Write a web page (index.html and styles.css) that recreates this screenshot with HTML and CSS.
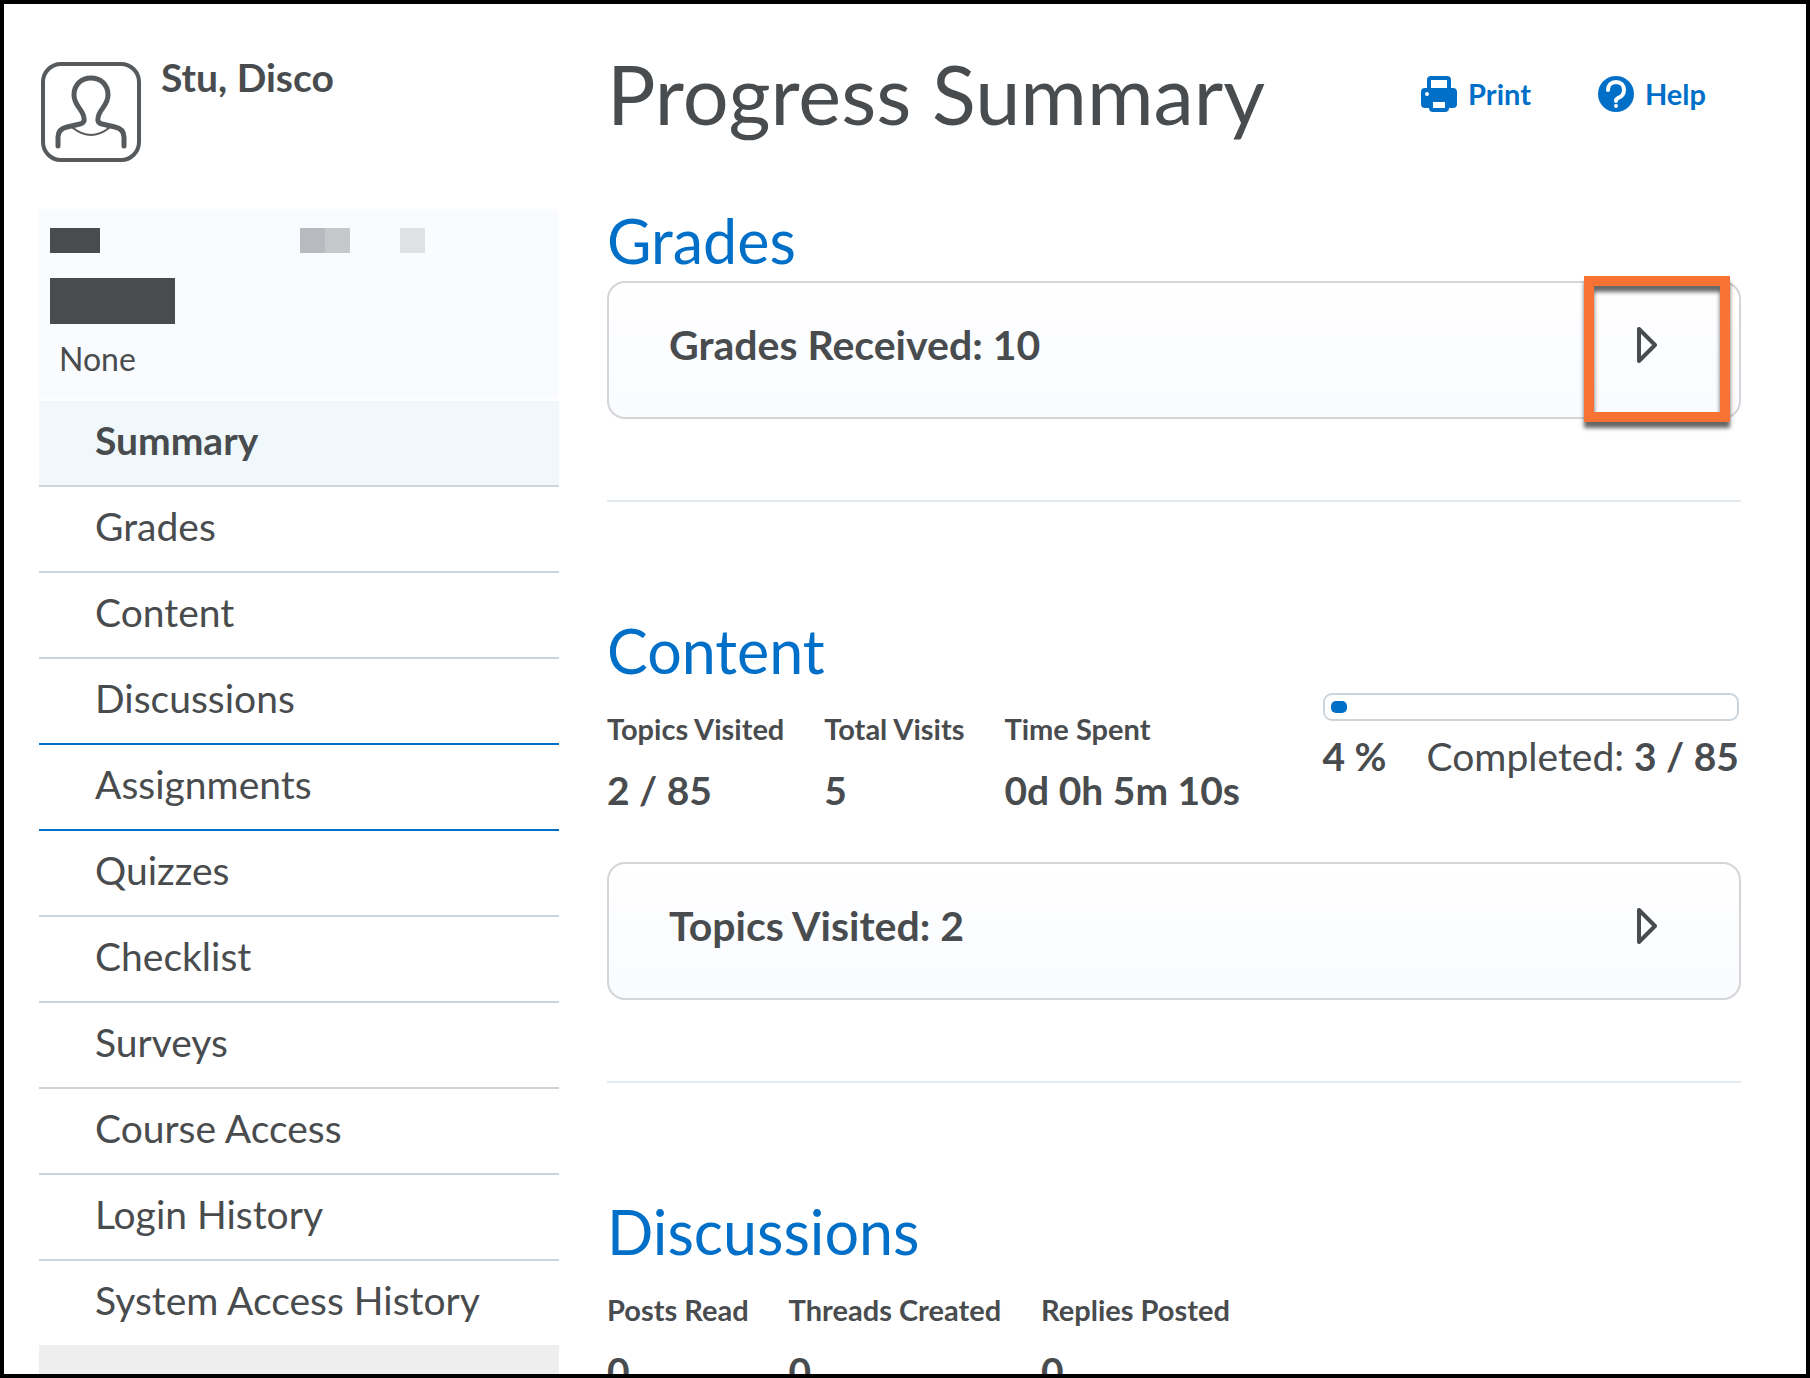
FILE: index.html
```html
<!DOCTYPE html>
<html lang="en">
<head>
    <meta charset="UTF-8">
    <meta name="viewport" content="width=device-width, initial-scale=1.0">
    <title>Progress Summary</title>
    <link rel="stylesheet" href="styles.css">
</head>
<body>
    <div class="page">
        <aside class="sidebar">
            <div class="user">
                <svg class="avatar" viewBox="0 0 100 100" fill="none" stroke="#565a5c" stroke-linecap="round">
                    <rect x="2" y="2" width="96" height="96" rx="18" stroke-width="4"/>
                    <path d="M17 84V75Q17 67 26 65L39 62Q44 61 43 56C42 47 33 44 33 33C33 22 41 16 50 16C59 16 67 22 67 33C67 44 58 47 57 56Q56 61 61 62L74 65Q83 67 83 75V84" stroke-width="5"/>
                    <path d="M32 66Q50 80 68 66" stroke-width="2"/>
                </svg>
                <span class="user-name">Stu, Disco</span>
            </div>
            <div class="course">
                <div class="blocks">
                    <span class="block dark"></span>
                    <span class="block gray"></span>
                    <span class="block silver"></span>
                    <span class="block light"></span>
                </div>
                <div class="block-large"></div>
                <p class="course-role">None</p>
            </div>
            <nav class="nav">
                <a href="#" class="current">Summary</a>
                <a href="#">Grades</a>
                <a href="#">Content</a>
                <a href="#" class="blue-line">Discussions</a>
                <a href="#" class="blue-line">Assignments</a>
                <a href="#">Quizzes</a>
                <a href="#">Checklist</a>
                <a href="#">Surveys</a>
                <a href="#">Course Access</a>
                <a href="#">Login History</a>
                <a href="#">System Access History</a>
            </nav>
            <div class="sidebar-end"></div>
        </aside>

        <main class="main">
            <header class="header">
                <h1>Progress Summary</h1>
                <div class="actions">
                    <a href="#">
                        <svg viewBox="0 0 36 36" fill="#006fc8">
                            <path fill-rule="evenodd" d="M6 12V4Q6 0 10 0H26Q30 0 30 4V12H32Q36 12 36 16V28Q36 32 32 32H28Q28 36 24 36H12Q8 36 8 32H4Q0 32 0 28V16Q0 12 4 12ZM10 4V12H26V4ZM12 26V32H24V26ZM6 16A2 2 0 1 0 6 20A2 2 0 1 0 6 16Z"/>
                        </svg>
                        Print
                    </a>
                    <a href="#">
                        <svg viewBox="0 0 36 36">
                            <circle cx="18" cy="18" r="18" fill="#006fc8"/>
                            <path d="M10 14C10 9 13 6 18 6C23 6 26 9 26 14C26 19 23 21 20 22Q18 23 18 25" fill="none" stroke="#fff" stroke-width="4" stroke-linecap="round"/>
                            <circle cx="18" cy="30" r="2" fill="#fff"/>
                        </svg>
                        Help
                    </a>
                </div>
            </header>

            <section class="section">
                <h2><a href="#">Grades</a></h2>
                <div class="panel">
                    <h3>Grades Received: 10</h3>
                    <button class="expand" aria-label="Show grades">
                        <svg viewBox="0 0 20 36"><path d="M2 2V34L18 18Z"/></svg>
                    </button>
                    <span class="highlight"></span>
                </div>
            </section>

            <section class="section">
                <h2><a href="#">Content</a></h2>
                <div class="details">
                    <table class="stats">
                        <tr>
                            <th>Topics Visited</th>
                            <th>Total Visits</th>
                            <th>Time Spent</th>
                        </tr>
                        <tr>
                            <td>2 / 85</td>
                            <td>5</td>
                            <td>0d 0h 5m 10s</td>
                        </tr>
                    </table>
                    <div class="completion">
                        <progress value="4" max="100" aria-label="Content completed"></progress>
                        <div class="completion-text">
                            <b>4 %</b>
                            <span>Completed: <b>3 / 85</b></span>
                        </div>
                    </div>
                </div>
                <div class="panel">
                    <h3>Topics Visited: 2</h3>
                    <button class="expand" aria-label="Show topics">
                        <svg viewBox="0 0 20 36"><path d="M2 2V34L18 18Z"/></svg>
                    </button>
                </div>
            </section>

            <section class="section">
                <h2><a href="#">Discussions</a></h2>
                <div class="details">
                    <table class="stats">
                        <tr>
                            <th>Posts Read</th>
                            <th>Threads Created</th>
                            <th>Replies Posted</th>
                        </tr>
                        <tr>
                            <td>0</td>
                            <td>0</td>
                            <td>0</td>
                        </tr>
                    </table>
                </div>
            </section>
        </main>
    </div>
</body>
</html>
```
FILE: styles.css
```css
* {
    box-sizing: border-box;
}

body {
    margin: 0;
    height: 100vh;
    overflow: hidden;
    border: 4px solid #000;
    background: #fff;
    color: #494c4e;
    font-family: Lato, sans-serif;
    font-size: 39px;
    line-height: 46px;
}

a {
    color: #006fc8;
    text-decoration: none;
}

h1, h2, h3, p {
    margin: 0;
    font-weight: normal;
}

.page {
    display: grid;
    grid-template-columns: 520px 1fr;
    gap: 48px;
    padding: 42px 65px 0 35px;
}

/* sidebar */

.user {
    display: flex;
    gap: 20px;
    padding: 8px 0 0 2px;
    height: 163px;
}

.avatar {
    width: 100px;
    height: 100px;
    margin-top: 8px;
}

.user-name {
    font-weight: bold;
}

.course {
    height: 190px;
    margin-bottom: 2px;
    padding: 19px 11px;
    background: #f9fbff;
}

.blocks {
    display: flex;
    height: 25px;
    margin-bottom: 25px;
}

.block {
    width: 25px;
}

.dark {
    width: 50px;
    margin-right: 200px;
    background: #494c4e;
}

.gray {
    background: #b9babf;
}

.silver {
    background: #c6c9cc;
}

.light {
    margin-left: 50px;
    background: #e0e1e5;
}

.block-large {
    width: 125px;
    height: 46px;
    background: #494c4e;
}

.course-role {
    padding: 12px 0 0 9px;
    font-size: 32px;
}

.nav {
    display: flex;
    flex-direction: column;
}

.nav a {
    padding: 16px 56px 22px;
    border-bottom: 2px solid #cdd5dc;
    color: #494c4e;
}

.nav .current {
    background: #f0f8fb;
    font-weight: bold;
}

.nav .blue-line {
    border-color: #006fc8;
}

.nav a:last-child {
    border-bottom: none;
}

.sidebar-end {
    height: 100px;
    background: #eee;
}

/* main */

.header {
    display: flex;
    align-items: center;
    justify-content: space-between;
    margin-bottom: 63px;
    padding-right: 35px;
}

h1 {
    font-size: 81px;
    line-height: 96px;
}

.actions {
    display: flex;
    gap: 67px;
    font-size: 29px;
    font-weight: bold;
}

.actions a {
    display: flex;
    align-items: center;
    gap: 11px;
}

.actions svg {
    width: 36px;
    height: 36px;
}

.section {
    margin-bottom: 113px;
    padding-bottom: 81px;
    border-bottom: 2px solid #e3e9f1;
}

.section:last-child {
    border-bottom: none;
}

h2 {
    margin-bottom: 4px;
    font-size: 61px;
    line-height: 72px;
}

.panel {
    position: relative;
    display: flex;
    justify-content: space-between;
    align-items: flex-start;
    height: 138px;
    padding: 38px 82px 0 60px;
    border: 2px solid #d3d5d6;
    border-radius: 18px;
    background: linear-gradient(#fff, #f9fbff);
}

h3 {
    font-size: 41px;
    font-weight: bold;
    line-height: 48px;
}

.expand {
    padding: 6px 0;
    border: none;
    background: none;
    cursor: pointer;
}

.expand svg {
    display: block;
    width: 20px;
    height: 36px;
    fill: none;
    stroke: #494c4e;
    stroke-width: 4;
    stroke-linejoin: round;
}

/* orange frame over the expand arrow */
.highlight {
    position: absolute;
    top: -7px;
    right: 9px;
    width: 146px;
    height: 146px;
    border: 10px solid #f87233;
    box-shadow: 0 6px 4px rgba(0, 0, 0, 0.6), inset 0 6px 4px rgba(0, 0, 0, 0.6);
    pointer-events: none;
}

.details {
    display: flex;
    justify-content: space-between;
    align-items: flex-start;
    margin-bottom: 49px;
    padding-right: 2px;
}

.stats {
    margin-top: 21px;
    border-collapse: collapse;
    font-weight: bold;
    text-align: left;
}

.stats th {
    padding: 0 40px 0 0;
    font-size: 29px;
    line-height: 34px;
}

.stats td {
    padding: 21px 40px 0 0;
}

.completion {
    margin-top: 2px;
}

progress {
    appearance: none;
    display: block;
    width: 100%;
    height: 28px;
    padding: 6px;
    border: 2px solid #cdd5dc;
    border-radius: 9px;
    background: #fff;
}

progress::-webkit-progress-bar {
    background: #fff;
}

progress::-webkit-progress-value {
    border-radius: 5px;
    background: #006fc8;
}

.completion-text {
    display: flex;
    gap: 40px;
    padding-top: 12px;
}
```
